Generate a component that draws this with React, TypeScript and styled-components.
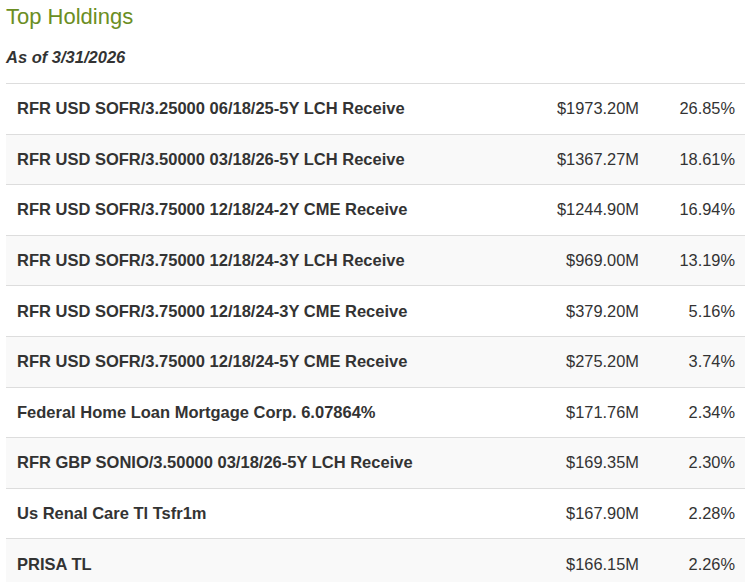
import React from 'react';
import styled, { createGlobalStyle } from 'styled-components';

const GlobalStyle = createGlobalStyle`
    body {
        margin: 0;
        background: #fff;
        font-family: "Liberation Sans", Arial, sans-serif;
        color: #333;
    }
`;

interface IHolding {
    name: string;
    value: string;
    weight: string;
}

const holdings: IHolding[] = [
    { name: 'RFR USD SOFR/3.25000 06/18/25-5Y LCH Receive', value: '$1973.20M', weight: '26.85%' },
    { name: 'RFR USD SOFR/3.50000 03/18/26-5Y LCH Receive', value: '$1367.27M', weight: '18.61%' },
    { name: 'RFR USD SOFR/3.75000 12/18/24-2Y CME Receive', value: '$1244.90M', weight: '16.94%' },
    { name: 'RFR USD SOFR/3.75000 12/18/24-3Y LCH Receive', value: '$969.00M', weight: '13.19%' },
    { name: 'RFR USD SOFR/3.75000 12/18/24-3Y CME Receive', value: '$379.20M', weight: '5.16%' },
    { name: 'RFR USD SOFR/3.75000 12/18/24-5Y CME Receive', value: '$275.20M', weight: '3.74%' },
    { name: 'Federal Home Loan Mortgage Corp. 6.07864%', value: '$171.76M', weight: '2.34%' },
    { name: 'RFR GBP SONIO/3.50000 03/18/26-5Y LCH Receive', value: '$169.35M', weight: '2.30%' },
    { name: 'Us Renal Care Tl Tsfr1m', value: '$167.90M', weight: '2.28%' },
    { name: 'PRISA TL', value: '$166.15M', weight: '2.26%' },
];

const Wrapper = styled.div`
    padding: 0 6px;
`;

const Title = styled.h2`
    margin: 0;
    padding-top: 5px;
    font-size: 22px;
    font-weight: normal;
    line-height: 24px;
    color: #6b8e23;
`;

const AsOf = styled.div`
    margin: 19px 0 17px;
    font-size: 16.5px;
    font-weight: bold;
    font-style: italic;
    line-height: 18px;
    color: #333;
`;

const Table = styled.div`
    width: 739px;
`;

const Row = styled.div<{ $striped: boolean }>`
    display: grid;
    grid-template-columns: 1fr 140px 96px;
    align-items: center;
    height: 49.6px;
    border-top: 1px solid #ddd;
    background: ${({ $striped }) => ($striped ? '#f9f9f9' : '#fff')};
    font-size: 16.5px;
`;

const NameCell = styled.div`
    padding-left: 11px;
    font-weight: bold;
    color: #333;
    white-space: nowrap;
`;

const NumCell = styled.div`
    padding-right: 10px;
    text-align: right;
    font-size: 16.4px;
    color: #333;
`;

const App = () => (
    <Wrapper>
        <GlobalStyle />
        <Title>Top Holdings</Title>
        <AsOf>As of 3/31/2026</AsOf>
        <Table>
            {holdings.map((h, i) => (
                <Row key={h.name} $striped={i % 2 === 1}>
                    <NameCell>{h.name}</NameCell>
                    <NumCell>{h.value}</NumCell>
                    <NumCell>{h.weight}</NumCell>
                </Row>
            ))}
        </Table>
    </Wrapper>
);

export default App;
